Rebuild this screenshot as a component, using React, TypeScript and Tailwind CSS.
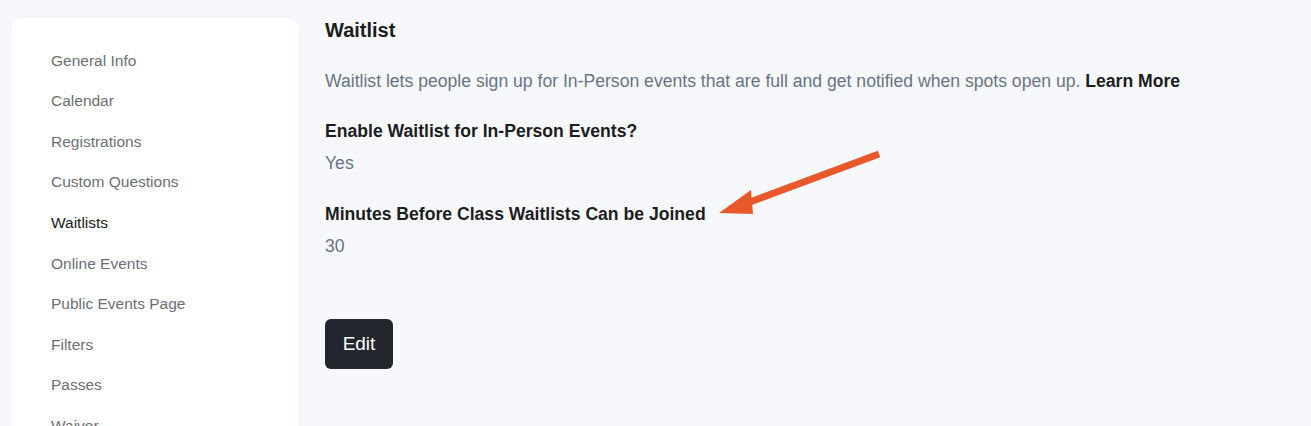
import React from "react";

const items = [
  "General Info",
  "Calendar",
  "Registrations",
  "Custom Questions",
  "Waitlists",
  "Online Events",
  "Public Events Page",
  "Filters",
  "Passes",
  "Waiver",
];

export default function App() {
  return (
    <div
      className="w-[1311px] h-[426px] overflow-hidden bg-[#f7f8fc] flex relative"
      style={{ fontFamily: '"Liberation Sans", Arial, sans-serif' }}
    >
      <div className="ml-[11px] mt-[18px] w-[288px] h-[500px] bg-white rounded-[10px] shadow-[0_0_6px_rgba(0,0,0,0.03)] pt-[22px] pl-[40px] flex flex-col shrink-0">
        {items.map((it) => (
          <div
            key={it}
            className={`h-[40.6px] shrink-0 flex items-center text-[15.5px] ${
              it === "Waitlists" ? "text-[#1c1d21]" : "text-[#6c6e75]"
            }`}
          >
            {it}
          </div>
        ))}
      </div>
      <div className="ml-[26px] pt-[17px] flex flex-col">
        <h1 className="text-[20px] font-bold text-[#1c1d21] leading-[26px]">Waitlist</h1>
        <p className="mt-[25px] text-[17.6px] text-[#687483] leading-[26px]">
          Waitlist lets people sign up for In-Person events that are full and get notified when spots open up.{" "}
          <span className="font-bold text-[#1c1d21]">Learn More</span>
        </p>
        <div className="mt-[24px] text-[17.6px] font-bold text-[#1c1d21] leading-[26px]">
          Enable Waitlist for In-Person Events?
        </div>
        <div className="mt-[6px] text-[17.6px] text-[#687483] leading-[26px]">Yes</div>
        <div className="mt-[25px] text-[17.6px] font-bold text-[#1c1d21] leading-[26px]">
          Minutes Before Class Waitlists Can be Joined
        </div>
        <div className="mt-[6px] text-[17.6px] text-[#687483] leading-[26px]">30</div>
        <div className="mt-[60px]">
          <button className="w-[68px] h-[50px] rounded-[6px] bg-[#23262e] text-white text-[19px] flex items-center justify-center">
            Edit
          </button>
        </div>
      </div>
      <svg
        className="absolute left-0 top-0"
        width="1311"
        height="426"
        viewBox="0 0 1311 426"
      >
        <line x1="879" y1="154" x2="742" y2="205" stroke="#e8582b" strokeWidth="7" />
        <polygon points="719,213 751,190 753,214" fill="#e8582b" />
      </svg>
    </div>
  );
}
